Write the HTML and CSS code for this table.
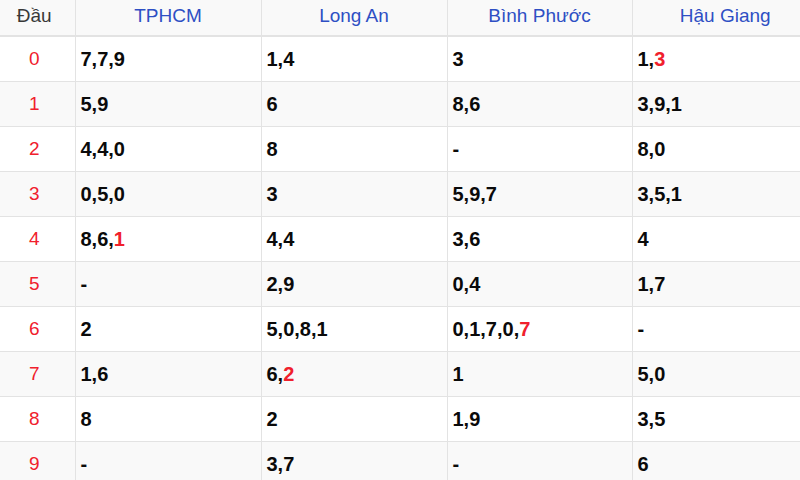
FILE: index.html
```html
<!DOCTYPE html>
<html>
<head>
<meta charset="utf-8">
<link rel="stylesheet" href="styles.css">
</head>
<body>
<table class="kq">
  <colgroup>
    <col class="c-dau"><col class="c-prov"><col class="c-prov"><col class="c-prov3"><col class="c-prov">
  </colgroup>
  <thead>
    <tr>
      <th class="dau">Đầu</th>
      <th>TPHCM</th>
      <th>Long An</th>
      <th>Bình Phước</th>
      <th>Hậu Giang</th>
    </tr>
  </thead>
  <tbody>
    <tr><td class="dau">0</td><td>7,7,9</td><td>1,4</td><td>3</td><td>1,<span class="r">3</span></td></tr>
    <tr><td class="dau">1</td><td>5,9</td><td>6</td><td>8,6</td><td>3,9,1</td></tr>
    <tr><td class="dau">2</td><td>4,4,0</td><td>8</td><td>-</td><td>8,0</td></tr>
    <tr><td class="dau">3</td><td>0,5,0</td><td>3</td><td>5,9,7</td><td>3,5,1</td></tr>
    <tr><td class="dau">4</td><td>8,6,<span class="r">1</span></td><td>4,4</td><td>3,6</td><td>4</td></tr>
    <tr><td class="dau">5</td><td>-</td><td>2,9</td><td>0,4</td><td>1,7</td></tr>
    <tr><td class="dau">6</td><td>2</td><td>5,0,8,1</td><td>0,1,7,0,<span class="r">7</span></td><td>-</td></tr>
    <tr><td class="dau">7</td><td>1,6</td><td>6,<span class="r">2</span></td><td>1</td><td>5,0</td></tr>
    <tr><td class="dau">8</td><td>8</td><td>2</td><td>1,9</td><td>3,5</td></tr>
    <tr><td class="dau">9</td><td>-</td><td>3,7</td><td>-</td><td>6</td></tr>
  </tbody>
</table>
</body>
</html>
```

FILE: styles.css
```css
html, body {
  margin: 0;
  padding: 0;
  background: #fff;
  overflow: hidden;
  width: 800px;
  height: 480px;
}
.kq {
  border-collapse: collapse;
  table-layout: fixed;
  width: 817px;
  font-family: "Liberation Sans", Arial, sans-serif;
}
.c-dau { width: 75px; }
.c-prov { width: 186px; }
.c-prov3 { width: 185px; }
.kq th {
  height: 31px;
  padding: 0 0 4px 0;
  font-weight: normal;
  font-size: 19px;
  color: #2e4fc4;
  text-align: center;
  background: #f9f9f9;
  border-bottom: 2px solid #e3e3e3;
  border-left: 1px solid #e3e3e3;
}
.kq th.dau {
  color: #383838;
  border-left: none;
  padding-right: 6px;
}
.kq td {
  height: 44px;
  padding: 0 0 0 5px;
  font-size: 20px;
  font-weight: bold;
  color: #0a0a0a;
  border-bottom: 1px solid #e3e3e3;
  border-left: 1px solid #e3e3e3;
  vertical-align: middle;
}
.kq td.dau {
  padding: 0 6px 0 0;
  text-align: center;
  font-weight: normal;
  font-size: 19px;
  color: #f0202c;
  border-left: none;
}
.kq tbody tr:nth-child(even) td {
  background: #f9f9f9;
}
.r { color: #f0202c; }
```
